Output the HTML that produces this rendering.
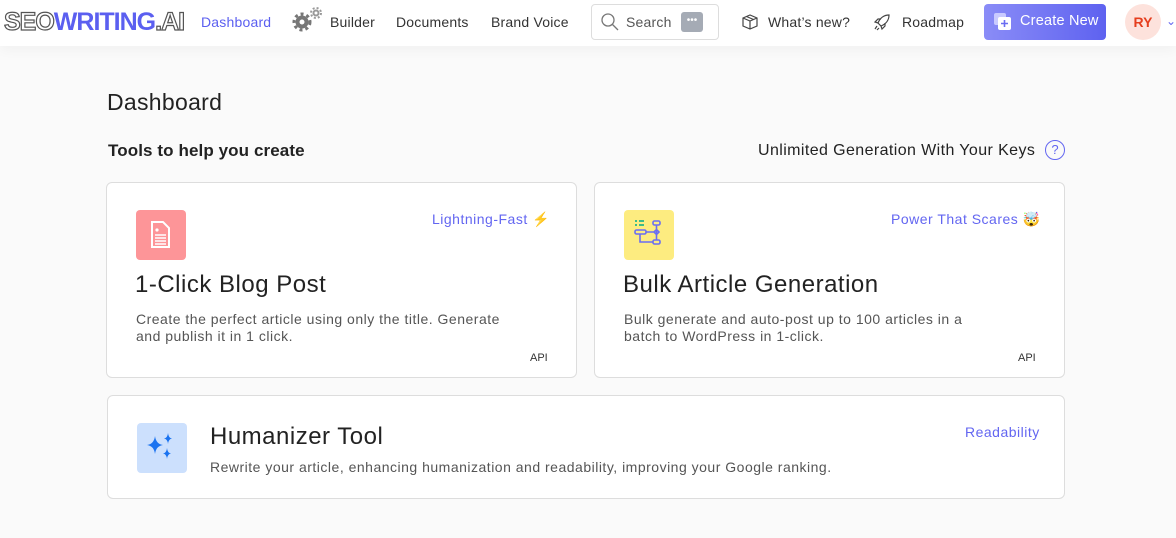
<!DOCTYPE html>
<html><head><meta charset="utf-8"><style>
*{box-sizing:border-box;margin:0;padding:0}
body{width:1176px;height:538px;overflow:hidden;background:#fafafa;font-family:"Liberation Sans",sans-serif;color:#222;position:relative}
.hdr{position:absolute;left:0;top:0;width:1176px;height:46px;background:#fff;box-shadow:0 4px 12px rgba(0,0,0,.04)}
.a{position:absolute;font-size:14px;color:#333;top:14px;letter-spacing:0.2px}
.card{position:absolute;background:#fff;border:1px solid #ddd;border-radius:6px}
.t{position:absolute;font-size:24px;color:#222;letter-spacing:0.5px}
.d{position:absolute;font-size:14px;color:#555;line-height:17px;letter-spacing:0.5px}
.tag{position:absolute;font-size:14px;color:#6366f1;letter-spacing:0.5px}
.api{position:absolute;font-size:11px;color:#333}
.ic{position:absolute;width:50px;height:50px;border-radius:4px}
</style></head><body>
<div class="hdr">
<div style="position:absolute;left:4px;top:8px;font-size:25px;font-weight:bold;letter-spacing:-1px"><span style="color:#fff;-webkit-text-stroke:1.2px #555">SEO</span><span style="color:#5b5ff0">WRITING</span><span style="color:#fff;-webkit-text-stroke:1.2px #555">.AI</span></div>
<div class="a" style="left:201px;color:#5b5ff0">Dashboard</div>
<svg style="position:absolute;left:292px;top:6px" width="32" height="28"><circle cx="10" cy="16" r="6.5" fill="#777"/><circle cx="10" cy="16" r="8" fill="none" stroke="#777" stroke-width="3" stroke-dasharray="3 3"/><circle cx="10" cy="16" r="2.5" fill="#fff"/><circle cx="24" cy="7" r="3.5" fill="#999"/><circle cx="24" cy="7" r="5" fill="none" stroke="#999" stroke-width="2" stroke-dasharray="2 2"/><circle cx="24" cy="7" r="1.5" fill="#fff"/></svg>
<div class="a" style="left:330px">Builder</div>
<div class="a" style="left:396px">Documents</div>
<div class="a" style="left:491px">Brand Voice</div>
<div style="position:absolute;left:591px;top:4px;width:128px;height:36px;border:1px solid #ddd;border-radius:4px"></div>
<svg style="position:absolute;left:600px;top:12px" width="20" height="20"><circle cx="8" cy="8" r="6" fill="none" stroke="#777" stroke-width="1.3"/><path d="M12.5 12.5L18 18" stroke="#777" stroke-width="1.3"/></svg>
<div class="a" style="left:626px;color:#555">Search</div>
<div style="position:absolute;left:681px;top:12px;width:22px;height:20px;background:#a5abb5;border-radius:3px;color:#fff;font-size:10px;text-align:center;line-height:18px">•••</div>
<svg style="position:absolute;left:741px;top:13px" width="18" height="18"><path d="M2 5L9 2L16 5V13L9 16L2 13ZM2 5L9 8L16 5M9 8V16M5.5 3.5L12.5 6.5" fill="none" stroke="#444" stroke-width="1.2"/></svg>
<div class="a" style="left:768px">What’s new?</div>
<svg style="position:absolute;left:873px;top:13px" width="18" height="18"><path d="M16 2C11 2 7 5 5 10L8 13C13 11 16 7 16 2ZM5 10L2 9L5 6H8M8 13L9 16L12 13V10M4 13L2 16M6 15L4 17" fill="none" stroke="#444" stroke-width="1.2"/></svg>
<div class="a" style="left:902px">Roadmap</div>
<div style="position:absolute;left:984px;top:4px;width:122px;height:36px;border-radius:4px;background:linear-gradient(90deg,#8a8cf7,#5e62f0)"></div>
<svg style="position:absolute;left:993px;top:12px" width="20" height="20"><rect x="1" y="1" width="12" height="12" rx="2" fill="#c9caff"/><rect x="5" y="5" width="13" height="13" rx="2" fill="#fff"/><path d="M11.5 8V15M8 11.5H15" stroke="#6a6df2" stroke-width="1.6"/></svg>
<div class="a" style="left:1020px;color:#fff;font-size:14.5px;top:13px">Create New</div>
<div style="position:absolute;left:1125px;top:4px;width:36px;height:36px;border-radius:50%;background:#fde2dc;color:#e53e1e;font-weight:bold;font-size:14px;text-align:center;line-height:36px">RY</div>
<div style="position:absolute;left:1166px;top:14px;color:#6366f1;font-size:12px">⌄</div>
</div>
<div style="position:absolute;left:107px;top:89px;font-size:23px;color:#222;letter-spacing:0.3px">Dashboard</div>
<div style="position:absolute;left:108px;top:141px;font-size:17px;font-weight:bold;color:#222;letter-spacing:0.1px">Tools to help you create</div>
<div style="position:absolute;left:758px;top:142px;font-size:16px;color:#222;letter-spacing:0.4px">Unlimited Generation With Your Keys</div>
<div style="position:absolute;left:1045px;top:140px;width:20px;height:20px;border:1.5px solid #6366f1;border-radius:50%;color:#6366f1;font-size:13px;text-align:center;line-height:17px">?</div>

<div class="card" style="left:106px;top:182px;width:471px;height:196px"></div>
<div class="ic" style="left:136px;top:210px;background:#fd9598"></div>
<svg style="position:absolute;left:150px;top:220px" width="22" height="30"><path d="M2 2H13L19 8V27H2Z" fill="none" stroke="#fff" stroke-width="2"/><circle cx="7" cy="10" r="1.6" fill="#fff"/><path d="M5 15H16M5 18H16M5 21H16M5 24H16" stroke="#fff" stroke-width="1.6"/></svg>
<div class="tag" style="left:432px;top:211px">Lightning-Fast <span style="color:#f6ad3b">⚡</span></div>
<div class="t" style="left:135px;top:271px">1-Click Blog Post</div>
<div class="d" style="left:136px;top:311px">Create the perfect article using only the title. Generate<br>and publish it in 1 click.</div>
<div class="api" style="left:530px;top:352px">API</div>

<div class="card" style="left:594px;top:182px;width:471px;height:196px"></div>
<div class="ic" style="left:624px;top:210px;background:#fdec80"></div>
<svg style="position:absolute;left:633px;top:218px" width="34" height="30"><path d="M2 3H4M2 7H4M6 3H11M6 7H11" stroke="#22b38a" stroke-width="1.8"/><rect x="2" y="12" width="11" height="4" rx="1.5" fill="none" stroke="#6a6df2" stroke-width="1.6"/><rect x="20" y="3" width="7" height="4" rx="1.5" fill="none" stroke="#6a6df2" stroke-width="1.6"/><rect x="20" y="22" width="7" height="4" rx="1.5" fill="none" stroke="#6a6df2" stroke-width="1.6"/><path d="M23.5 7V22M13 14H21M7 16V24H20M21 14L23.5 11.5L26 14L23.5 16.5Z" fill="none" stroke="#6a6df2" stroke-width="1.6"/></svg>
<div class="tag" style="left:891px;top:211px">Power That Scares 🤯</div>
<div class="t" style="left:623px;top:271px">Bulk Article Generation</div>
<div class="d" style="left:624px;top:311px">Bulk generate and auto-post up to 100 articles in a<br>batch to WordPress in 1-click.</div>
<div class="api" style="left:1018px;top:352px">API</div>

<div class="card" style="left:107px;top:395px;width:958px;height:104px"></div>
<div class="ic" style="left:137px;top:423px;background:#cce0fd"></div>
<svg style="position:absolute;left:145px;top:430px" width="34" height="34"><path d="M10 6Q11 14 18 15Q11 16 10 24Q9 16 2 15Q9 14 10 6Z" fill="#1a73f0"/><path d="M23 3Q23.5 8 27 8.5Q23.5 9 23 14Q22.5 9 19 8.5Q22.5 8 23 3Z" fill="#1a73f0"/><path d="M22 18Q22.5 23 26 23.5Q22.5 24 22 29Q21.5 24 18 23.5Q21.5 23 22 18Z" fill="#1a73f0"/></svg>
<div class="tag" style="left:965px;top:424px">Readability</div>
<div class="t" style="left:210px;top:423px">Humanizer Tool</div>
<div class="d" style="left:210px;top:459px">Rewrite your article, enhancing humanization and readability, improving your Google ranking.</div>
</body></html>
